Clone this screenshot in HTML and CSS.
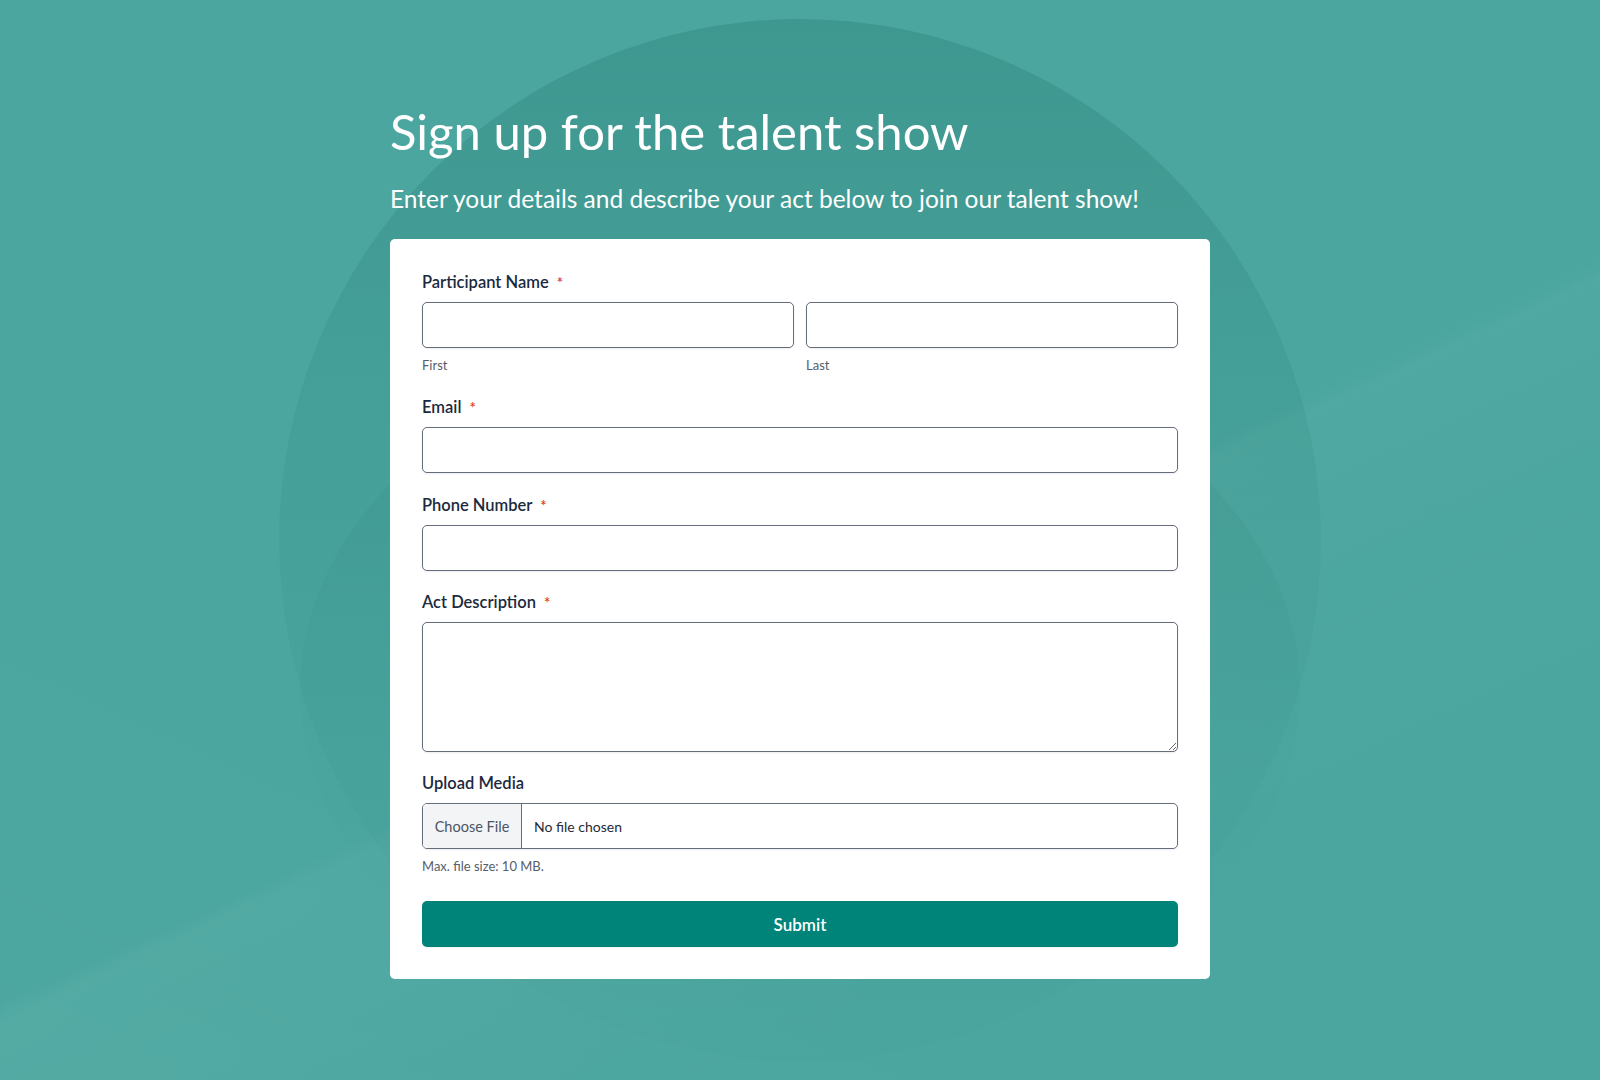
FILE: index.html
```html
<!DOCTYPE html>
<html lang="en">
<head>
<meta charset="utf-8">
<title>Sign up for the talent show</title>
<link rel="stylesheet" href="styles.css">
</head>
<body>
<div class="bg" aria-hidden="true">
  <div class="ring ring-outer"></div>
  <div class="ring ring-inner"></div>
</div>
<main class="page">
  <h1 class="title">Sign up for the talent show</h1>
  <p class="subtitle">Enter your details and describe your act below to join our talent show!</p>
  <form class="card">
    <div class="field">
      <div class="label">Participant Name <span class="req">*</span></div>
      <div class="name-row">
        <div class="name-col">
          <input class="input" type="text">
          <div class="sublabel">First</div>
        </div>
        <div class="name-col">
          <input class="input" type="text">
          <div class="sublabel">Last</div>
        </div>
      </div>
    </div>
    <div class="field">
      <div class="label">Email <span class="req">*</span></div>
      <input class="input" type="email">
    </div>
    <div class="field">
      <div class="label">Phone Number <span class="req">*</span></div>
      <input class="input" type="tel">
    </div>
    <div class="field">
      <div class="label">Act Description <span class="req">*</span></div>
      <textarea class="input textarea"></textarea>
    </div>
    <div class="field">
      <div class="label">Upload Media</div>
      <div class="file">
        <span class="file-btn">Choose File</span>
        <span class="file-name">No file chosen</span>
      </div>
      <div class="sublabel">Max. file size: 10 MB.</div>
    </div>
    <button class="submit" type="button">Submit</button>
  </form>
</main>
</body>
</html>
```
FILE: styles.css
```css
* { box-sizing: border-box; }

html, body {
  margin: 0;
  padding: 0;
}

body {
  min-height: 1080px;
  background: #4aa69f;
  font-family: Lato, "Open Sans", Arial, sans-serif;
  overflow: hidden;
  position: relative;
}

.bg {
  position: absolute;
  inset: 0;
  overflow: hidden;
  z-index: 0;
  background:
    linear-gradient(155deg, rgba(255,255,255,0) 55%, rgba(255,255,255,0.03) 56%, rgba(255,255,255,0) 80%),
    linear-gradient(25deg, rgba(255,255,255,0.025) 0%, rgba(255,255,255,0) 30%);
}

.ring {
  position: absolute;
  border-radius: 50%;
}

.ring-outer {
  left: 279px;
  top: 19px;
  width: 1042px;
  height: 1042px;
  background: linear-gradient(180deg, rgba(20,100,90,0.22) 0%, rgba(20,100,90,0.10) 35%, rgba(20,100,90,0.04) 70%, rgba(20,100,90,0.02) 100%);
}

.ring-inner {
  left: 300px;
  top: 330px;
  width: 1000px;
  height: 720px;
  background: linear-gradient(180deg, rgba(20,100,90,0.10) 0%, rgba(20,100,90,0.02) 60%, rgba(20,100,90,0) 100%);
}

.page {
  position: relative;
  z-index: 1;
  width: 820px;
  margin: 0 auto;
  padding-top: 102px;
}

.title {
  margin: 0 0 23px;
  font-size: 49px;
  line-height: 58px;
  font-weight: 400;
  color: #ffffff;
}

.subtitle {
  margin: 0 0 24px;
  font-size: 24.5px;
  line-height: 32px;
  font-weight: 400;
  color: #ffffff;
}

.card {
  background: #ffffff;
  border-radius: 5px;
  padding: 31px 32px 32px;
  display: flex;
  flex-direction: column;
  gap: 19.5px;
}

.field {
  display: flex;
  flex-direction: column;
}

.label {
  font-size: 16.5px;
  line-height: 24px;
  font-weight: 600;
  color: #1b2a3e;
  margin-bottom: 8px;
}

.req {
  color: #e03c22;
  font-size: 15px;
  font-weight: 600;
  margin-left: 4px;
}

.name-row {
  display: grid;
  grid-template-columns: 1fr 1fr;
  gap: 12px;
}

.name-col {
  display: flex;
  flex-direction: column;
}

.input {
  display: block;
  width: 100%;
  height: 46px;
  margin: 0;
  border: 1px solid #656d7b;
  border-radius: 5px;
  background: #ffffff;
  box-shadow: 0 1px 2px rgba(16,24,40,0.08);
  font-family: inherit;
  font-size: 15px;
  padding: 0 12px;
}

.textarea {
  height: 129.5px;
  resize: vertical;
  padding: 10px 12px;
}

.sublabel {
  margin-top: 8px;
  font-size: 13px;
  line-height: 19.5px;
  color: #555e6b;
}

.file {
  display: flex;
  align-items: stretch;
  height: 46px;
  border: 1px solid #656d7b;
  border-radius: 5px;
  overflow: hidden;
  box-shadow: 0 1px 2px rgba(16,24,40,0.08);
}

.file-btn {
  display: flex;
  align-items: center;
  justify-content: center;
  flex: 0 0 99px;
  white-space: nowrap;
  background: #f3f4f6;
  border-right: 1px solid #656d7b;
  font-size: 14.5px;
  color: #4b5563;
}

.file-name {
  display: flex;
  align-items: center;
  padding-left: 12px;
  white-space: nowrap;
  font-size: 14px;
  color: #1f2937;
}

.submit {
  margin-top: 5px;
  height: 46px;
  width: 100%;
  border: 0;
  border-radius: 5px;
  background: #00847a;
  color: #ffffff;
  font-family: inherit;
  font-size: 17px;
  font-weight: 600;
  box-shadow: 0 1px 2px rgba(16,24,40,0.06);
}
```
